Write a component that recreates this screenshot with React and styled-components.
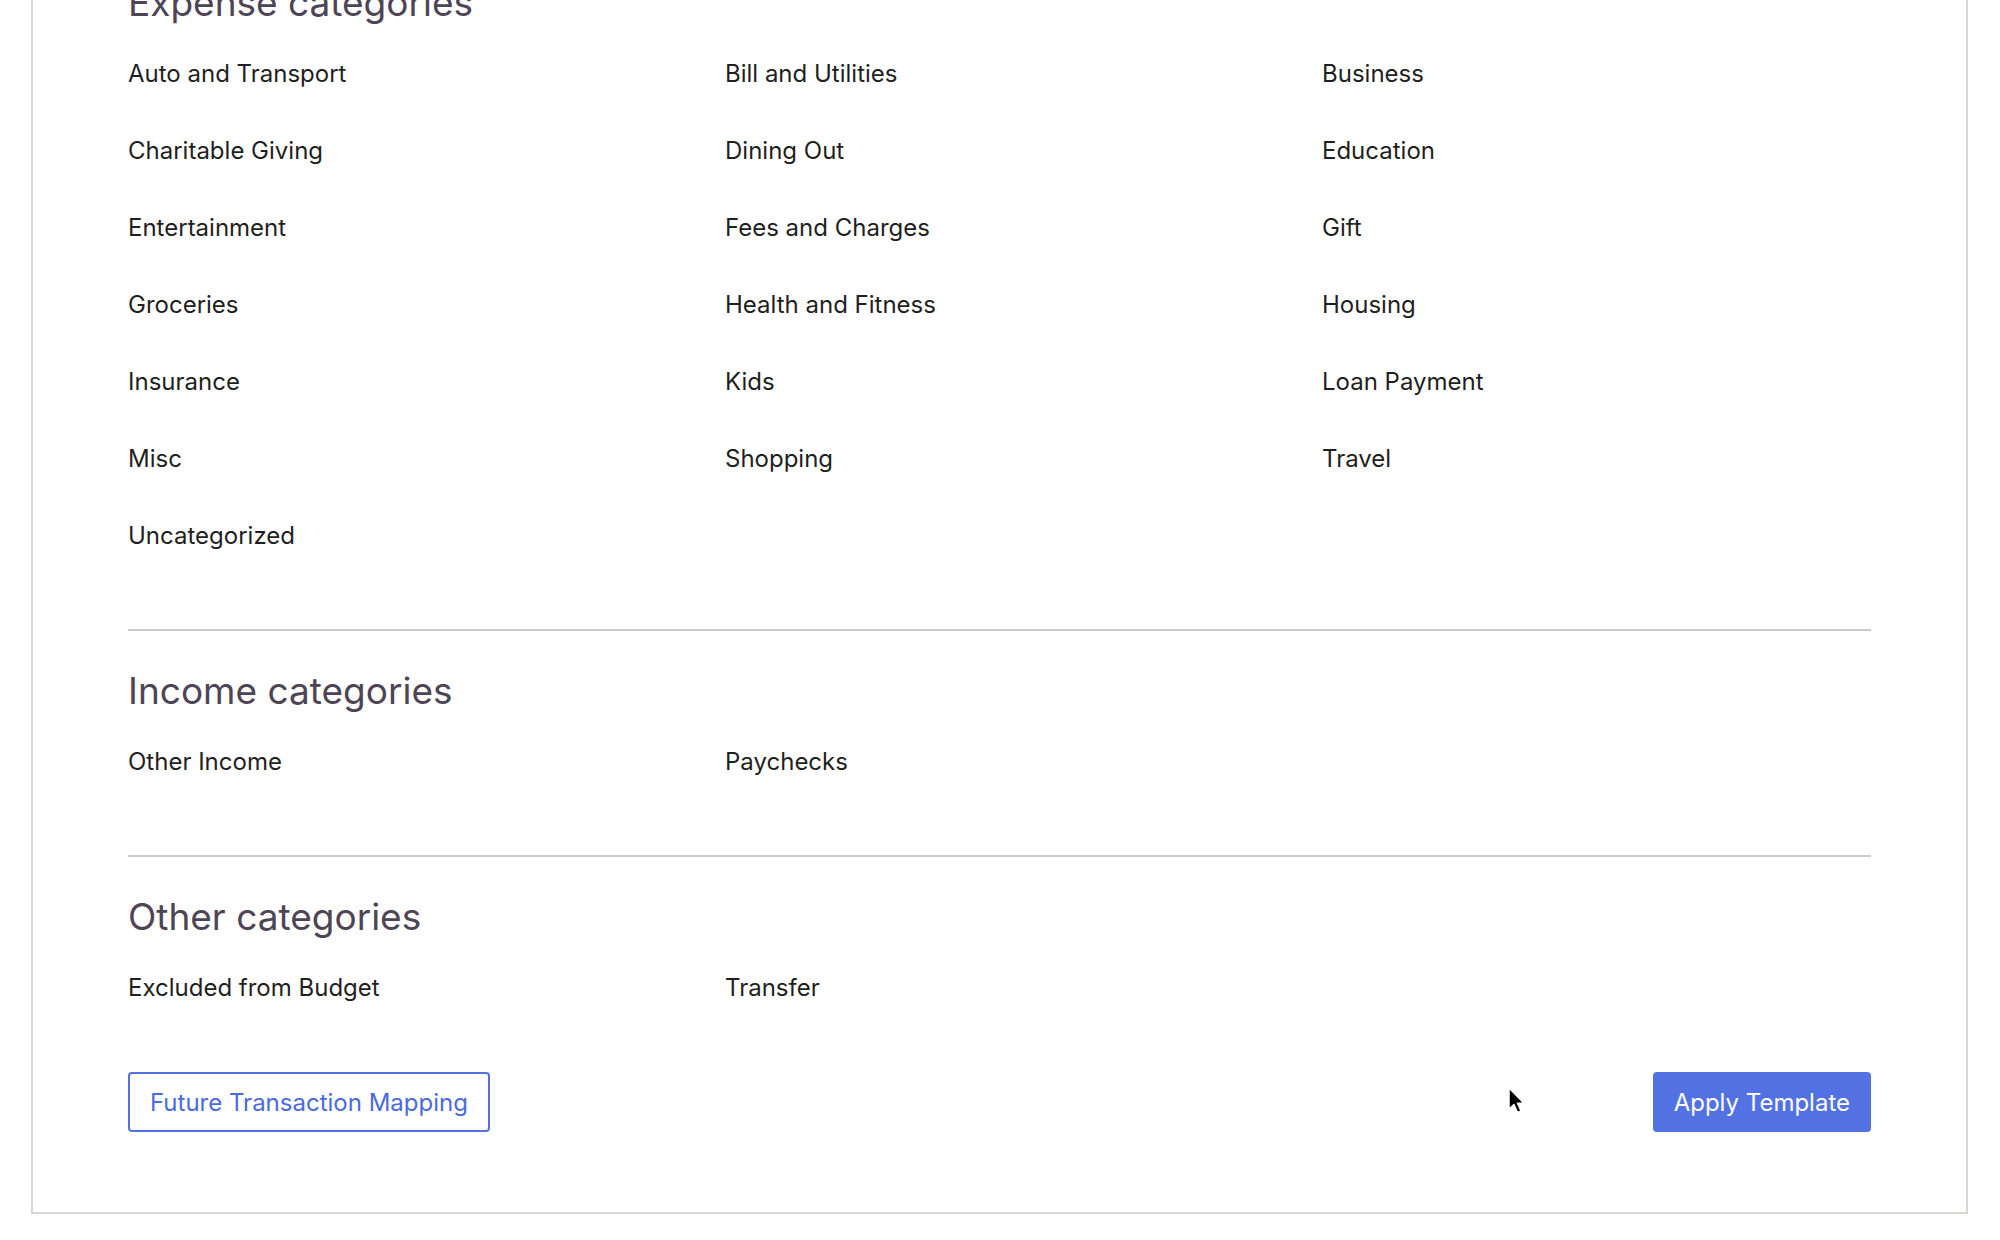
import React from "react";
import styled, { createGlobalStyle } from "styled-components";

const GlobalStyle = createGlobalStyle`
  html, body {
    margin: 0;
    padding: 0;
    background: #ffffff;
  }
  body {
    font-family: Inter, "Noto Sans", "Liberation Sans", sans-serif;
    -webkit-font-smoothing: antialiased;
  }
`;

const Page = styled.div`
  position: relative;
  width: 2000px;
  height: 1240px;
  overflow: hidden;
`;

const Card = styled.div`
  box-sizing: border-box;
  width: 1937px;
  margin-left: 31px;
  margin-top: -19px;
  border: 2px solid #d9d7d2;
  border-top: none;
  padding: 0 95px 80px 95px;
  background: #ffffff;
`;

const Section = styled.section`
  display: flex;
  flex-direction: column;
`;

const Heading = styled.h2`
  margin: 0 0 10px 0;
  font-size: 37px;
  line-height: 44px;
  font-weight: 400;
  color: #4d4556;
`;

const Grid = styled.div`
  display: grid;
  grid-template-columns: repeat(3, 1fr);
  column-gap: 48px;
`;

const Item = styled.div`
  height: 77px;
  display: flex;
  align-items: center;
  font-size: 24px;
  color: #1f1f22;
`;

const Divider = styled.hr`
  border: none;
  height: 2px;
  background: #cbcbcb;
  margin: 55px 0 38px 0;
`;

const Footer = styled.div`
  display: flex;
  justify-content: space-between;
  align-items: center;
  margin-top: 46px;
`;

const Button = styled.button`
  box-sizing: border-box;
  height: 60px;
  padding: 0 ${(p) => (p.$primary ? "19px" : "20px")};
  border-radius: 4px;
  font-family: inherit;
  font-size: 24px;
  cursor: pointer;
  border: 2px solid #5272e4;
  background: ${(p) => (p.$primary ? "#5272e4" : "#ffffff")};
  color: ${(p) => (p.$primary ? "#ffffff" : "#4a6ae0")};
`;

const Cursor = styled.svg`
  position: absolute;
  left: 1507px;
  top: 1087px;
  width: 20px;
  height: 28px;
  pointer-events: none;
`;

const sections = [
  {
    title: "Expense categories",
    items: [
      "Auto and Transport",
      "Bill and Utilities",
      "Business",
      "Charitable Giving",
      "Dining Out",
      "Education",
      "Entertainment",
      "Fees and Charges",
      "Gift",
      "Groceries",
      "Health and Fitness",
      "Housing",
      "Insurance",
      "Kids",
      "Loan Payment",
      "Misc",
      "Shopping",
      "Travel",
      "Uncategorized",
    ],
  },
  { title: "Income categories", items: ["Other Income", "Paychecks"] },
  { title: "Other categories", items: ["Excluded from Budget", "Transfer"] },
];

export default function App() {
  return (
    <Page>
      <GlobalStyle />
      <Card>
        {sections.map((s, i) => (
          <React.Fragment key={s.title}>
            {i > 0 && <Divider />}
            <Section>
              <Heading>{s.title}</Heading>
              <Grid>
                {s.items.map((it) => (
                  <Item key={it}>{it}</Item>
                ))}
              </Grid>
            </Section>
          </React.Fragment>
        ))}
        <Footer>
          <Button>Future Transaction Mapping</Button>
          <Button $primary>Apply Template</Button>
        </Footer>
      </Card>
      <Cursor viewBox="0 0 20 28">
        <path
          d="M2 1 L2 22 L7 17.5 L10.5 25.5 L14 24 L10.5 16.2 L17 16.2 Z"
          fill="#000"
          stroke="#fff"
          strokeWidth="1.5"
          strokeLinejoin="round"
        />
      </Cursor>
    </Page>
  );
}
